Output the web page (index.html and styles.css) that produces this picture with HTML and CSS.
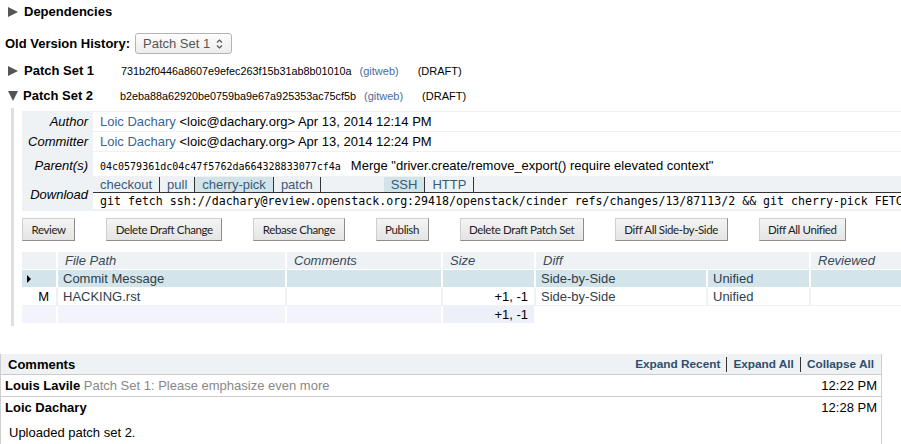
FILE: index.html
```html
<!DOCTYPE html>
<html>
<head>
<meta charset="utf-8">
<title>Change 87113</title>
<link rel="stylesheet" href="styles.css">
</head>
<body>
<div class="disc"><span class="tri-r"></span><b>Dependencies</b></div>

<div class="ovh">
  <b>Old Version History:</b>
  <span class="sel">Patch Set 1
    <svg class="updown" width="7" height="12" viewBox="0 0 7 12"><path d="M1 4.5 L3.5 2 L6 4.5" fill="none" stroke="#555" stroke-width="1.2"/><path d="M1 7.5 L3.5 10 L6 7.5" fill="none" stroke="#555" stroke-width="1.2"/></svg>
  </span>
</div>

<div class="ps first">
  <span class="tri-r"></span><b class="psname">Patch Set 1</b>
  <span class="hash">731b2f0446a8607e9efec263f15b31ab8b01010a</span>
  <a class="gw">(gitweb)</a>
  <span class="draft">(DRAFT)</span>
</div>
<div class="ps">
  <span class="tri-d"></span><b class="psname">Patch Set 2</b>
  <span class="hash">b2eba88a62920be0759ba9e67a925353ac75cf5b</span>
  <a class="gw">(gitweb)</a>
  <span class="draft">(DRAFT)</span>
</div>

<div class="psbody">
  <table class="info">
    <tr><td class="lbl">Author</td><td class="val"><a class="lnk">Loic Dachary</a> &lt;loic@dachary.org&gt; Apr 13, 2014 12:14 PM</td></tr>
    <tr><td class="lbl">Committer</td><td class="val"><a class="lnk">Loic Dachary</a> &lt;loic@dachary.org&gt; Apr 13, 2014 12:24 PM</td></tr>
    <tr class="par"><td class="lbl">Parent(s)</td><td class="val"><span class="phash">04c0579361dc04c47f5762da664328833077cf4a</span>Merge "driver.create/remove_export() require elevated context"</td></tr>
    <tr class="dl"><td class="lbl">Download</td><td class="dlval">
      <div class="tabs">
        <span class="tab">checkout</span><span class="tab">pull</span><span class="tab on">cherry-pick</span><span class="tab">patch</span>
        <span class="tab on proto">SSH</span><span class="tab">HTTP</span>
      </div>
      <div class="cmd">git fetch ssh://dachary@review.openstack.org:29418/openstack/cinder refs/changes/13/87113/2 &amp;&amp; git cherry-pick FETCH_HEAD</div>
    </td></tr>
  </table>

  <div class="actions">
    <button class="btn">Review</button>
    <button class="btn">Delete Draft Change</button>
    <button class="btn">Rebase Change</button>
    <button class="btn">Publish</button>
    <button class="btn">Delete Draft Patch Set</button>
    <button class="btn">Diff All Side-by-Side</button>
    <button class="btn">Diff All Unified</button>
  </div>

  <table class="files">
    <colgroup>
      <col class="w0"><col class="w1"><col class="w2"><col class="w3"><col class="w4"><col class="w5"><col class="w6">
    </colgroup>
    <tr class="fh">
      <th></th><th>File Path</th><th>Comments</th><th>Size</th><th colspan="2">Diff</th><th>Reviewed</th>
    </tr>
    <tr class="sel-row">
      <td><span class="ptr"></span></td><td>Commit Message</td><td></td><td></td><td>Side-by-Side</td><td>Unified</td><td></td>
    </tr>
    <tr class="frow">
      <td class="st">M</td><td>HACKING.rst</td><td></td><td class="num">+1, -1</td><td>Side-by-Side</td><td>Unified</td><td></td>
    </tr>
    <tr class="tot">
      <td></td><td></td><td></td><td class="num sum">+1, -1</td><td class="blank" colspan="3"></td>
    </tr>
  </table>
</div>

<div class="comments">
  <div class="chead">
    <b>Comments</b>
    <span class="clinks"><a>Expand Recent</a><a>Expand All</a><a>Collapse All</a></span>
  </div>
  <div class="crow">
    <span><b>Louis Lavile</b> <span class="summary">Patch Set 1: Please emphasize even more</span></span>
    <span class="time">12:22 PM</span>
  </div>
  <div class="crow open">
    <span><b>Loic Dachary</b></span>
    <span class="time">12:28 PM</span>
  </div>
  <div class="cbody">Uploaded patch set 2.</div>
</div>
</body>
</html>
```

FILE: styles.css
```css
html, body {
  margin: 0;
  padding: 0;
  overflow: hidden;
}
body {
  font-family: "Liberation Sans", Arial, sans-serif;
  font-size: 13px;
  color: #000;
  background: #fff;
  width: 901px;
  height: 444px;
}
a { text-decoration: none; cursor: pointer; }

.tri-r {
  display: inline-block;
  width: 0; height: 0;
  border-left: 10px solid #555;
  border-top: 5.5px solid transparent;
  border-bottom: 5.5px solid transparent;
  margin-right: 6px;
}
.tri-d {
  display: inline-block;
  width: 0; height: 0;
  border-top: 10px solid #555;
  border-left: 5.5px solid transparent;
  border-right: 5.5px solid transparent;
  margin-right: 5px;
}

.disc {
  height: 23px;
  display: flex;
  align-items: center;
  padding-left: 8px;
}

.ovh {
  margin-top: 10px;
  height: 21px;
  display: flex;
  align-items: center;
  padding-left: 5px;
}
.sel {
  margin-left: 5px;
  height: 19px;
  width: 88px;
  padding-left: 7px;
  border: 1px solid #b4b4b4;
  border-radius: 3px;
  background: linear-gradient(#fdfdfd, #ececec);
  color: #555;
  display: flex;
  align-items: center;
  position: relative;
}
.updown {
  position: absolute;
  right: 8px;
  top: 4px;
}

.ps {
  height: 25px;
  display: flex;
  align-items: center;
  padding-left: 8px;
}
.ps.first { margin-top: 4px; }
.psname { width: 97px; }
.hash { font-size: 10.8px; }
.gw { font-size: 11px; color: #4a6d9a; margin-left: 8px; }
.draft { font-size: 11px; margin-left: 19px; }

.psbody {
  margin-left: 11px;
  border-left: 3px solid #dedede;
  padding: 3px 0 2px 8px;
}

.info {
  border-collapse: separate;
  border-spacing: 0 1px;
  background: #eef2f4;
  width: 1000px;
}
.info td { padding: 0; }
.info .lbl {
  width: 66px;
  padding-right: 5px;
  text-align: right;
  font-style: italic;
  height: 19px;
  white-space: nowrap;
}
.info .val {
  background: #fff;
  padding-left: 7px;
  white-space: nowrap;
}
.info .par td { height: 24px; padding-top: 2px; box-sizing: border-box; }
.lnk { color: #3b6592; }
.phash {
  font-family: "DejaVu Sans Mono", monospace;
  font-size: 10px;
  margin-right: 10px;
}
.info .dl .lbl { padding-top: 1px; }
.dlval { white-space: nowrap; }
.tabs {
  height: 15px;
  border-bottom: 1px solid #333;
  display: flex;
  color: #36597c;
}
.tab {
  padding: 0 7px;
  border-right: 1px solid #333;
  line-height: 15px;
}
.tab.on { background: #d3e4e9; }
.tab.proto { margin-left: 63px; }
.cmd {
  background: #fff;
  height: 16px;
  line-height: 16px;
  padding-left: 7px;
  font-family: "DejaVu Sans Mono", monospace;
  font-size: 11.6px;
  overflow: hidden;
  margin-bottom: 1px;
}

.actions {
  display: flex;
  gap: 31px;
  margin-top: 7px;
}
.btn {
  height: 23px;
  padding: 0 8.5px;
  font-family: Lato, "Open Sans", sans-serif;
  font-size: 11.5px;
  letter-spacing: -0.38px;
  color: #222;
  background: linear-gradient(#f4f4f4, #e4e4e4);
  border: 1px solid;
  border-color: #cfcfcf #8c8c8c #8c8c8c #cfcfcf;
  border-radius: 0;
  margin: 0;
}

.files {
  margin-top: 11px;
  border-collapse: collapse;
  width: 1000px;
  table-layout: fixed;
}
.w0 { width: 35px; }
.w1 { width: 229px; }
.w2 { width: 156px; }
.w3 { width: 93px; }
.w4 { width: 172px; }
.w5 { width: 103px; }
.w6 { width: 212px; }
.files th, .files td {
  height: 17px;
  padding: 0 0 0 5px;
  text-align: left;
  border-right: 2px solid #fff;
  border-bottom: 1px solid #fff;
  white-space: nowrap;
  overflow: hidden;
  color: #2f3d4a;
}
.files th {
  font-weight: normal;
  font-style: italic;
  background: #eef2f4;
  padding-left: 7px;
  color: #39495a;
}
.sel-row td { background: #d3e5ea; }
.frow td { border-right-color: #eef2f4; border-bottom-color: #eef2f4; }
.files td.num { text-align: right; padding-right: 6px; color: #000; }
.files td.st { text-align: right; padding-right: 7px; color: #000; }
.tot td { background: #f3f3fc; }
.tot td.sum { background: #eef0f9; }
.tot td.blank { background: #fff; }
.ptr {
  display: inline-block;
  width: 0; height: 0;
  border-left: 4px solid #000;
  border-top: 4px solid transparent;
  border-bottom: 4px solid transparent;
}

.comments {
  margin-top: 28px;
  width: 880px;
  border-left: 1px solid #cfcfcf;
  border-right: 1px solid #cfcfcf;
}
.chead {
  height: 20px;
  background: #eef2f4;
  border-bottom: 1px solid #cccccc;
  display: flex;
  align-items: center;
  justify-content: space-between;
  padding: 0 7px;
}
.clinks { display: flex; }
.clinks a {
  font-weight: bold;
  font-size: 11.8px;
  color: #2f4d6d;
  padding: 0 6px;
  border-left: 1px solid #333;
  line-height: 15px;
}
.clinks a:first-child { border-left: 0; }
.clinks a:last-child { padding-right: 0; }
.crow {
  height: 21px;
  display: flex;
  align-items: center;
  justify-content: space-between;
  padding: 0 4px;
  border-bottom: 1px solid #cccccc;
}
.crow.open { border-bottom: 0; }
.summary { color: #888; }
.cbody {
  padding: 5px 8px 0;
  line-height: 20px;
  height: 30px;
}
```
